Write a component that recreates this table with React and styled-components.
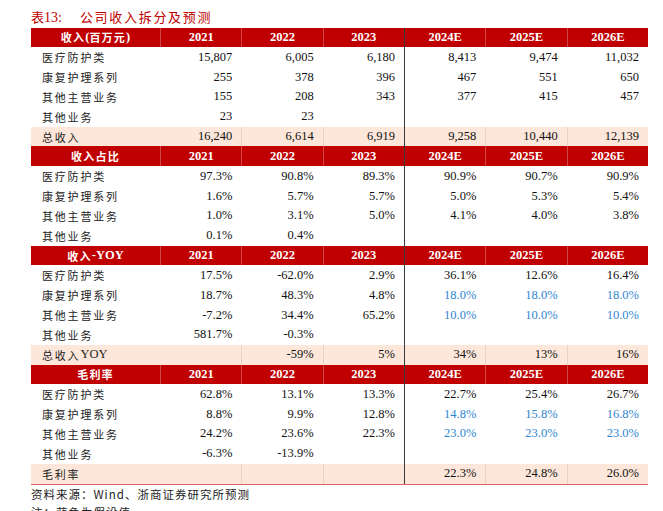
import React from "react";
import styled, { createGlobalStyle } from "styled-components";

const Global = createGlobalStyle`
  html, body { margin: 0; padding: 0; background: #fff; }
  body { font-family: "Liberation Serif", "Noto Sans CJK SC", serif; }
`;

const Page = styled.div`
  width: 663px;
  height: 511px;
  overflow: hidden;
  padding-left: 31px;
  box-sizing: border-box;
`;

const Title = styled.div`
  margin-top: 6px;
  height: 21px;
  line-height: 21px;
  color: #c00000;
  font-size: 14px;
  display: flex;
  gap: 18px;
  font-family: "Liberation Serif", "Noto Sans CJK SC", serif;
`;

const TitleCn = styled.span`
  font-family: "Noto Sans CJK SC", serif;
  font-size: 13px;
  letter-spacing: ${(p) => (p.$tight ? "0" : "1.7px")};
`;

const Table = styled.div`
  width: 617px;
  margin-top: 0.5px;
  border-bottom: 1px solid #e06060;
`;

const Row = styled.div`
  display: grid;
  grid-template-columns: 129px repeat(6, 1fr);
  height: 19.83px;
  background: ${(p) => (p.$kind === "head" ? "#c00000" : p.$kind === "total" ? "#fce7da" : "#fff")};
`;

const Cell = styled.div`
  display: flex;
  align-items: center;
  justify-content: ${(p) => (p.$head ? "center" : "flex-end")};
  padding-right: ${(p) => (p.$head ? "0" : "9px")};
  font-size: 12.5px;
  font-weight: ${(p) => (p.$head ? 700 : 400)};
  color: ${(p) => (p.$head ? "#fff" : p.$blue ? "#2f86d0" : "#111")};
  border-left: 1px solid
    ${(p) =>
      p.$divider
        ? "#3a3a3a"
        : p.$head
        ? "rgba(255,255,255,0.28)"
        : p.$total
        ? "rgba(200,170,150,0.35)"
        : "transparent"};
  white-space: nowrap;
`;

const Label = styled.div`
  display: flex;
  align-items: center;
  justify-content: ${(p) => (p.$head ? "center" : "flex-start")};
  padding-left: ${(p) => (p.$head ? "0" : "11px")};
  font-family: "Noto Sans CJK SC", "Liberation Serif", serif;
  font-size: 11px;
  letter-spacing: ${(p) => (p.$head ? "1.2px" : "1.8px")};
  font-weight: ${(p) => (p.$head ? 700 : 400)};
  color: ${(p) => (p.$head ? "#fff" : "#222")};
  white-space: nowrap;
`;

const Latin = styled.span`
  font-family: "Liberation Serif", serif;
  font-size: 12.5px;
  letter-spacing: 0;
  font-weight: inherit;
`;

const Source = styled.div`
  font-family: "Noto Sans CJK SC", serif;
  font-size: 11.5px;
  color: #222;
  line-height: 18px;
  letter-spacing: 1px;
`;

const years = ["2021", "2022", "2023", "2024E", "2025E", "2026E"];

const B = (v) => ({ v, blue: true });

const sections = [
  {
    head: [<>收入<Latin>(</Latin>百万元<Latin>)</Latin></>],
    rows: [
      ["医疗防护类", ["15,807", "6,005", "6,180", "8,413", "9,474", "11,032"]],
      ["康复护理系列", ["255", "378", "396", "467", "551", "650"]],
      ["其他主营业务", ["155", "208", "343", "377", "415", "457"]],
      ["其他业务", ["23", "23", "", "", "", ""]],
    ],
    total: ["总收入", ["16,240", "6,614", "6,919", "9,258", "10,440", "12,139"]],
  },
  {
    head: ["收入占比"],
    rows: [
      ["医疗防护类", ["97.3%", "90.8%", "89.3%", "90.9%", "90.7%", "90.9%"]],
      ["康复护理系列", ["1.6%", "5.7%", "5.7%", "5.0%", "5.3%", "5.4%"]],
      ["其他主营业务", ["1.0%", "3.1%", "5.0%", "4.1%", "4.0%", "3.8%"]],
      ["其他业务", ["0.1%", "0.4%", "", "", "", ""]],
    ],
  },
  {
    head: [<>收入<Latin>-YOY</Latin></>],
    rows: [
      ["医疗防护类", ["17.5%", "-62.0%", "2.9%", "36.1%", "12.6%", "16.4%"]],
      ["康复护理系列", ["18.7%", "48.3%", "4.8%", B("18.0%"), B("18.0%"), B("18.0%")]],
      ["其他主营业务", ["-7.2%", "34.4%", "65.2%", B("10.0%"), B("10.0%"), B("10.0%")]],
      ["其他业务", ["581.7%", "-0.3%", "", "", "", ""]],
    ],
    total: [<>总收入 <Latin>YOY</Latin></>, ["", "-59%", "5%", "34%", "13%", "16%"]],
  },
  {
    head: ["毛利率"],
    rows: [
      ["医疗防护类", ["62.8%", "13.1%", "13.3%", "22.7%", "25.4%", "26.7%"]],
      ["康复护理系列", ["8.8%", "9.9%", "12.8%", B("14.8%"), B("15.8%"), B("16.8%")]],
      ["其他主营业务", ["24.2%", "23.6%", "22.3%", B("23.0%"), B("23.0%"), B("23.0%")]],
      ["其他业务", ["-6.3%", "-13.9%", "", "", "", ""]],
    ],
    total: ["毛利率", ["", "", "", "22.3%", "24.8%", "26.0%"]],
  },
];

function DataRow({ label, values, total }) {
  return (
    <Row $kind={total ? "total" : "data"}>
      <Label>{label}</Label>
      {values.map((val, i) => {
        const blue = typeof val === "object" && val !== null && val.blue;
        const text = blue ? val.v : val;
        return (
          <Cell key={i} $blue={blue} $total={total && i > 0} $divider={i === 3}>
            {text}
          </Cell>
        );
      })}
    </Row>
  );
}

export default function App() {
  return (
    <>
      <Global />
      <Page>
        <Title>
          <span>
            <TitleCn $tight>表</TitleCn>13:
          </span>
          <TitleCn>公司收入拆分及预测</TitleCn>
        </Title>
        <Table>
          {sections.map((s, si) => (
            <React.Fragment key={si}>
              <Row $kind="head">
                <Label $head>{s.head[0]}</Label>
                {years.map((y, i) => (
                  <Cell key={y} $head $divider={i === 3}>
                    {y}
                  </Cell>
                ))}
              </Row>
              {s.rows.map((r, ri) => (
                <DataRow key={ri} label={r[0]} values={r[1]} />
              ))}
              {s.total && <DataRow label={s.total[0]} values={s.total[1]} total />}
            </React.Fragment>
          ))}
        </Table>
        <Source>资料来源：Wind、浙商证券研究所预测</Source>
        <Source>注：蓝色为假设值</Source>
      </Page>
    </>
  );
}
